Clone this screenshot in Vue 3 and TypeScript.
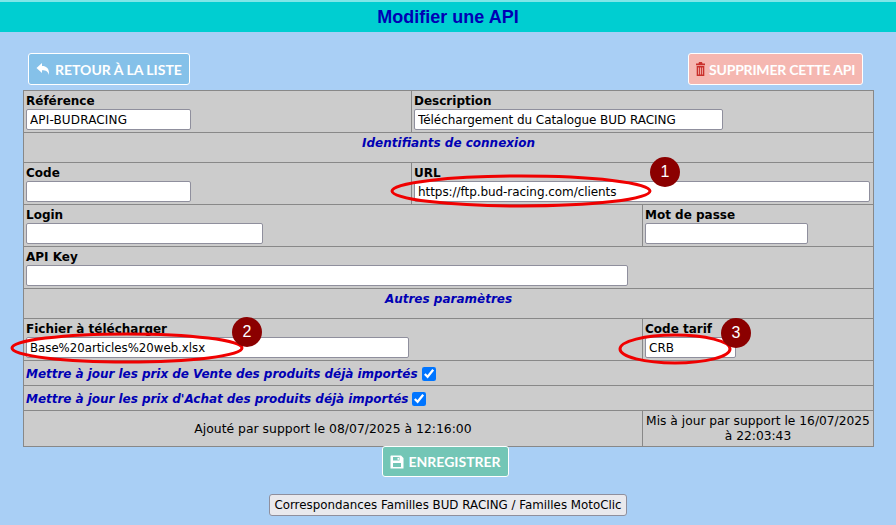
<script setup lang="ts">
const marks = [
  { n: 1, ex: 521, ey: 191, rx: 129, ry: 15, cx: 665, cy: 172 },
  { n: 2, ex: 127, ey: 348, rx: 115, ry: 14, cx: 247, cy: 332 },
  { n: 3, ex: 675, ey: 349, rx: 55, ry: 14, cx: 736, cy: 333 },
]
</script>

<template>
  <div class="page">
    <div class="strip"></div>
    <h1 class="title">Modifier une API</h1>
    <div class="actions">
      <a class="btn blue">
        <svg class="ico" viewBox="0 0 14 14" width="14" height="14"><path d="M0.5 6 L6 1 V4 C10.5 4 13.5 6.5 13 13 C12 9.5 10 8.3 6 8.3 V11 Z" fill="#fff" /></svg>
        RETOUR À LA LISTE
      </a>
      <a class="btn red">
        <svg class="ico" viewBox="0 0 9 14" width="9" height="14"><path d="M3 0 H6 L6.5 1.5 H9 V3.2 H0 V1.5 H2.5 Z M0.7 4 H8.3 V14 H0.7 Z" fill="#c9302c" /><path d="M2.6 5.5 V12.5 M4.5 5.5 V12.5 M6.4 5.5 V12.5" stroke="#f5b7b1" stroke-width="0.9" /></svg>
        SUPPRIMER CETTE API
      </a>
    </div>
    <table class="form">
      <colgroup><col class="c1" /><col class="c2" /><col class="c3" /></colgroup>
      <tbody>
        <tr class="r42">
          <td><b>Référence</b><br /><input class="w165 wide" value="API-BUDRACING" /></td>
          <td colspan="2"><b>Description</b><br /><input class="w309 narrow" value="Téléchargement du Catalogue BUD RACING" /></td>
        </tr>
        <tr class="r30"><td colspan="3" class="section">Identifiants de connexion</td></tr>
        <tr class="r42">
          <td><b>Code</b><br /><input class="w165" /></td>
          <td colspan="2"><b>URL</b><br /><input class="w456 narrow" value="https://ftp.bud-racing.com/clients" /></td>
        </tr>
        <tr class="r42">
          <td colspan="2"><b>Login</b><br /><input class="w237" /></td>
          <td><b>Mot de passe</b><br /><input class="w163" /></td>
        </tr>
        <tr class="r42"><td colspan="3"><b>API Key</b><br /><input class="w602" /></td></tr>
        <tr class="r30"><td colspan="3" class="section">Autres paramètres</td></tr>
        <tr class="r42">
          <td colspan="2"><b>Fichier à télécharger</b><br /><input class="w383 tight" value="Base%20articles%20web.xlsx" /></td>
          <td><b>Code tarif</b><br /><input class="w91" value="CRB" /></td>
        </tr>
        <tr class="r25"><td colspan="3" class="check"><em>Mettre à jour les prix de Vente des produits déjà importés</em><input type="checkbox" checked /></td></tr>
        <tr class="r25"><td colspan="3" class="check"><em>Mettre à jour les prix d'Achat des produits déjà importés</em><input type="checkbox" checked /></td></tr>
        <tr class="r36">
          <td colspan="2" class="center added">Ajouté par support le 08/07/2025 à 12:16:00</td>
          <td class="center updated">Mis à jour par support le 16/07/2025 à 22:03:43</td>
        </tr>
      </tbody>
    </table>
    <div class="save-row">
      <a class="btn green">
        <svg class="ico" viewBox="0 0 14 14" width="14" height="14"><path fill-rule="evenodd" d="M1 0.5 H11 L13.5 3 V13.5 H0.5 V1 Z M3 2 V5.5 H9.5 V2 Z M3 8 V12 H11 V8 Z" fill="#fff" /><path d="M7.5 2.7 H9 V4.8 H7.5 Z" fill="#fff" /></svg>
        ENREGISTRER
      </a>
    </div>
    <div class="map-row"><button class="map" type="button">Correspondances Familles BUD RACING / Familles MotoClic</button></div>

    <svg class="overlay" width="896" height="525" viewBox="0 0 896 525">
      <g v-for="m in marks" :key="m.n">
        <ellipse :cx="m.ex" :cy="m.ey" :rx="m.rx" :ry="m.ry" fill="none" stroke="#f00000" stroke-width="3" />
      </g>
    </svg>
    <span v-for="m in marks" :key="m.n" class="badge" :style="{ left: m.cx - 15 + 'px', top: m.cy - 15 + 'px' }">{{ m.n }}</span>
  </div>
</template>

<style>
html, body { margin: 0; background: #a9cff5; }
</style>

<style scoped>
.page { position: relative; width: 896px; height: 525px; overflow: hidden; background: #a9cff5; font-family: "DejaVu Sans", sans-serif; font-size: 12px; color: #000; }
.strip { height: 2px; background: #7fe6e8; }
.title { margin: 0; height: 30px; background: #00ced1; color: #0000b4; font: bold 18px/30px "Liberation Sans", sans-serif; text-align: center; }
.actions { display: flex; justify-content: space-between; padding: 21px 33px 0 28px; height: 37px; }
.btn { display: inline-flex; align-items: center; gap: 4px; box-sizing: border-box; height: 32px; padding: 0 7px; border: 1px solid #fff; border-radius: 3px; color: #fff; font: bold 14px "Lato", sans-serif; white-space: nowrap; }
.ico { flex: none; }
.blue { width: 162px; background: #85c1e9; gap: 5px; }
.red { width: 175px; background: #f5b7b1; letter-spacing: -0.2px; }
.green { width: 127px; height: 31px; background: #73c6b6; gap: 5px; }
.form { width: 850px; margin-left: 23px; border-collapse: collapse; table-layout: fixed; background: #ccc; }
.c1 { width: 388px; }
.c2 { width: 231px; }
.c3 { width: 231px; }
.form td { border: 1px solid #888; padding: 3px 2px 1px; vertical-align: top; line-height: 15px; }
.r42 td { height: 37px; }
.r30 td { height: 25px; }
.form .r25 td { height: 19px; padding: 5px 2px 0; line-height: 16px; }
.form .r36 td { height: 31px; padding: 2px; vertical-align: middle; }
b { font-weight: bold; }
input:not([type]) { box-sizing: border-box; height: 21px; padding: 1px 3px; border: 1px solid #8f8f9d; border-radius: 2px; background: #fff; font: 12px "DejaVu Sans", sans-serif; color: #000; display: block; margin: 0; outline: none; }
input.tight { font-size: 11.75px; }
input.narrow { letter-spacing: -0.06px; }
input.wide { letter-spacing: 0.15px; }
.w163 { width: 163px; }
.w165 { width: 165px; }
.w309 { width: 309px; }
.w456 { width: 456px; }
.w237 { width: 237px; }
.w602 { width: 602px; }
.w383 { width: 383px; }
.w91 { width: 91px; }
.section { text-align: center; color: #0000b4; font-weight: bold; font-style: italic; }
.check { color: #0000b4; font-weight: bold; }
.check em { font-style: italic; letter-spacing: -0.04px; }
.check input { display: inline-block; width: 14px; height: 14px; margin: -2px 0 0 4px; vertical-align: middle; }
.form td.center { text-align: center; }
.form td.added { font-size: 12.4px; }
.form td.updated { font-size: 12.25px; }
.save-row { display: flex; justify-content: center; margin-top: -1px; margin-left: -6px; height: 32px; }
.map-row { display: flex; justify-content: center; margin-top: 16px; }
.map { box-sizing: border-box; width: 358px; height: 22px; padding: 0; border: 1px solid #8f8f9d; border-radius: 3px; background: #e9e9ed; font: 11.85px "DejaVu Sans", sans-serif; color: #000; }
.overlay { position: absolute; left: 0; top: 0; pointer-events: none; }
.badge { position: absolute; width: 30px; height: 30px; border-radius: 50%; background: #8b0000; color: #fff; font: 16px/30px "Liberation Sans", sans-serif; text-align: center; }
</style>
